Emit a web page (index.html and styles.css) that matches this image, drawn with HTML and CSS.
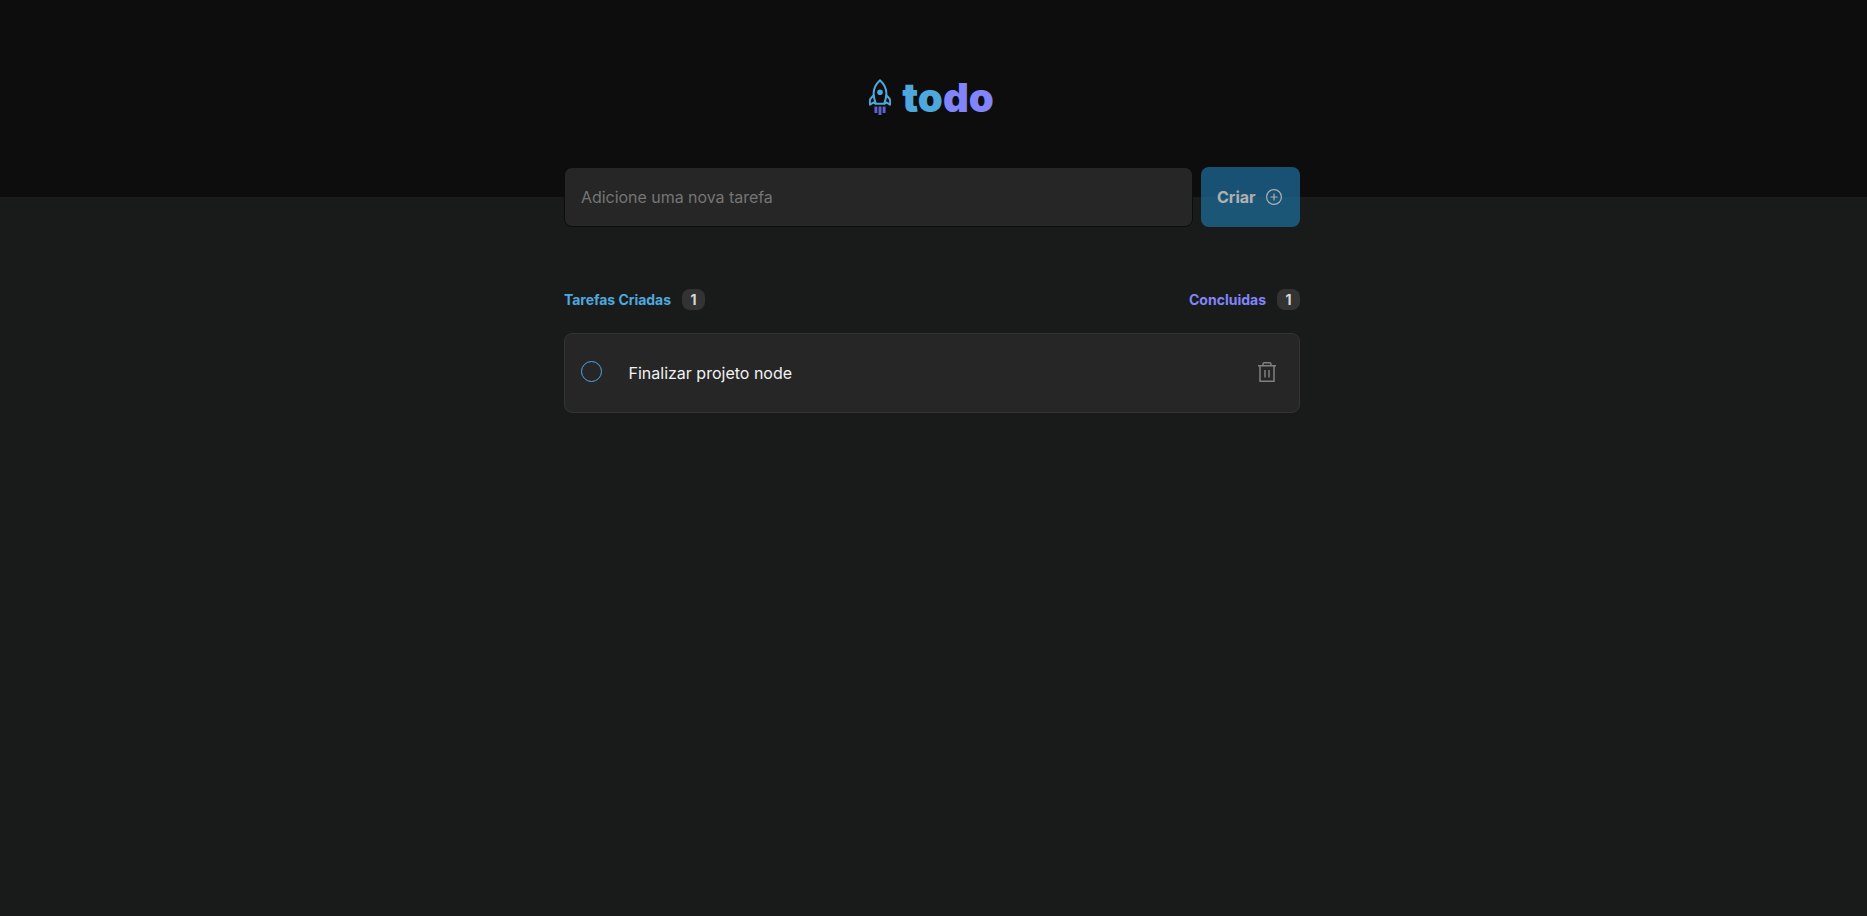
FILE: index.html
```html
<!DOCTYPE html>
<html lang="pt-BR">
<head>
<meta charset="utf-8">
<title>todo</title>
<link rel="stylesheet" href="styles.css">
</head>
<body>
<header class="header">
  <svg class="rocket" width="22" height="36" viewBox="0 0 22 36" fill="none">
    <path d="M11 1.200C7.500 4.500 4.600 9 4.600 14.500c0 4 1 7 2.200 10.300h8.400c1.200-3.300 2.200-6.300 2.200-10.300C17.400 9 14.500 4.500 11 1.200Z" stroke="#4EA8DE" stroke-width="2" stroke-linejoin="round"/>
    <path d="M4.600 16.200 1.300 20c-.6 1.700-.6 3.800-.3 5.700l3.400-2.200 2.600 1.300M17.400 16.200l3.300 3.800c.6 1.700.6 3.800.3 5.700l-3.400-2.200-2.600 1.300" stroke="#4EA8DE" stroke-width="2" stroke-linejoin="round"/>
    <circle cx="11" cy="13.300" r="2.800" fill="#4EA8DE"/>
    <path d="M6.900 27.500v6.500M11 27.500v8.500M15.100 27.500v6.500" stroke="#5E60CE" stroke-width="2.900"/>
  </svg>
  <h1 class="logo">to<span class="logo-end">do</span></h1>
</header>
<main class="content">
  <form class="new-task">
    <input class="task-input" type="text" placeholder="Adicione uma nova tarefa">
    <button class="create" type="button">Criar
      <svg width="16" height="16" viewBox="0 0 16 16" fill="none" stroke="currentColor" stroke-width="1.200"><circle cx="8" cy="8" r="7.400"/><path d="M8 4.500v7M4.500 8h7"/></svg>
    </button>
  </form>
  <div class="summary">
    <p class="created">Tarefas Criadas <span class="count">1</span></p>
    <p class="done">Concluidas <span class="count">1</span></p>
  </div>
  <article class="task">
    <span class="check"></span>
    <p class="task-text">Finalizar projeto node</p>
    <svg class="trash" width="18" height="20" viewBox="0 0 18 20" fill="none" stroke="#808080" stroke-width="1.500"><path d="M0 3.800h18M2 4v15.200h14V4M5 3.800V2.200Q5 .8 6.400.8h5.200Q13 .8 13 2.200v1.600M7 8v7.500M11 8v7.500"/></svg>
  </article>
</main>
</body>
</html>
```
FILE: styles.css
```css
* { box-sizing: border-box; margin: 0; }
body {
  min-height: 100vh;
  background: #191b1a;
  color: #f2f2f2;
  font: 400 16px "Inter", sans-serif;
}
.header {
  height: 197px;
  padding: 0 4px 3px 0;
  background: #0d0d0d;
  display: flex;
  justify-content: center;
  align-items: center;
  gap: 11px;
}
.logo {
  margin-top: 2px;
  color: #4ea8de;
  font-size: 40px;
  font-weight: 900;
  line-height: 48px;
}
.logo-end { color: #8284fa; }
.content { width: 736px; margin: -30px 0 0 564px; }
.new-task { display: flex; gap: 8px; height: 60px; }
.task-input {
  flex: 1;
  min-width: 0;
  padding: 0 16px;
  border: 1px solid #0d0d0d;
  border-radius: 8px;
  background: #262626;
  color: #f2f2f2;
  font: inherit;
  letter-spacing: -0.04px;
}
.task-input::placeholder { color: #757575; }
.create {
  width: 99px;
  padding: 0 18px 0 16px;
  border: 0;
  border-radius: 8px;
  display: flex;
  align-items: center;
  justify-content: space-between;
  background: #1e6f9f;
  color: #f2f2f2;
  font: 700 16px "Inter", sans-serif;
  opacity: .7;
}
.summary {
  margin-top: 62px;
  display: flex;
  justify-content: space-between;
  font-size: 14px;
  font-weight: 700;
}
.summary p { display: flex; align-items: center; gap: 11px; }
.created { color: #4ea8de; letter-spacing: -0.04px; }
.done { color: #8284fa; }
.count {
  width: 23px;
  height: 21px;
  border-radius: 8px;
  background: #333;
  color: #d9d9d9;
  line-height: 21px;
  text-align: center;
}
.task {
  margin-top: 23px;
  height: 80px;
  padding: 0 23px 0 16px;
  border: 1px solid #333;
  border-radius: 8px;
  background: #262626;
  display: flex;
  align-items: center;
}
.check {
  width: 21px;
  height: 21px;
  margin-bottom: 3px;
  border: 1px solid #4ea8de;
  border-radius: 50%;
}
.task-text { flex: 1; margin-left: 26.5px; }
.trash { margin-bottom: 2px; }
```
